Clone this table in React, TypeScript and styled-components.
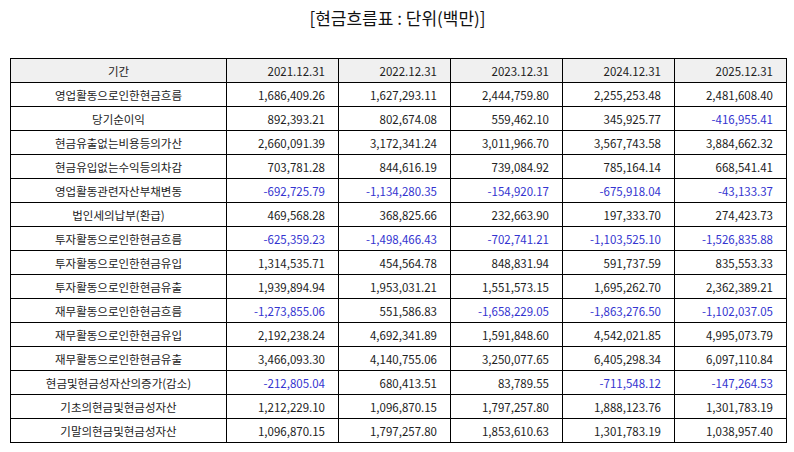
import styled, { createGlobalStyle } from "styled-components";

interface Row {
  label: string;
  values: number[];
}

const periods = ["2021.12.31", "2022.12.31", "2023.12.31", "2024.12.31", "2025.12.31"];

const rows: Row[] = [
  { label: "영업활동으로인한현금흐름", values: [1686409.26, 1627293.11, 2444759.8, 2255253.48, 2481608.4] },
  { label: "당기순이익", values: [892393.21, 802674.08, 559462.1, 345925.77, -416955.41] },
  { label: "현금유출없는비용등의가산", values: [2660091.39, 3172341.24, 3011966.7, 3567743.58, 3884662.32] },
  { label: "현금유입없는수익등의차감", values: [703781.28, 844616.19, 739084.92, 785164.14, 668541.41] },
  { label: "영업활동관련자산부채변동", values: [-692725.79, -1134280.35, -154920.17, -675918.04, -43133.37] },
  { label: "법인세의납부(환급)", values: [469568.28, 368825.66, 232663.9, 197333.7, 274423.73] },
  { label: "투자활동으로인한현금흐름", values: [-625359.23, -1498466.43, -702741.21, -1103525.1, -1526835.88] },
  { label: "투자활동으로인한현금유입", values: [1314535.71, 454564.78, 848831.94, 591737.59, 835553.33] },
  { label: "투자활동으로인한현금유출", values: [1939894.94, 1953031.21, 1551573.15, 1695262.7, 2362389.21] },
  { label: "재무활동으로인한현금흐름", values: [-1273855.06, 551586.83, -1658229.05, -1863276.5, -1102037.05] },
  { label: "재무활동으로인한현금유입", values: [2192238.24, 4692341.89, 1591848.6, 4542021.85, 4995073.79] },
  { label: "재무활동으로인한현금유출", values: [3466093.3, 4140755.06, 3250077.65, 6405298.34, 6097110.84] },
  { label: "현금및현금성자산의증가(감소)", values: [-212805.04, 680413.51, 83789.55, -711548.12, -147264.53] },
  { label: "기초의현금및현금성자산", values: [1212229.1, 1096870.15, 1797257.8, 1888123.76, 1301783.19] },
  { label: "기말의현금및현금성자산", values: [1096870.15, 1797257.8, 1853610.63, 1301783.19, 1038957.4] },
];

const format = (n: number) =>
  n.toLocaleString("en-US", { minimumFractionDigits: 2, maximumFractionDigits: 2 });

const App = () => {
  return (
    <>
      <GlobalStyle />
      <Page>
        <Title>[현금흐름표 : 단위(백만)]</Title>
        <Table>
          <colgroup>
            <col style={{ width: 216 }} />
            {periods.map((p) => (
              <col key={p} style={{ width: 112 }} />
            ))}
          </colgroup>
          <thead>
            <tr>
              <HeadCell>기간</HeadCell>
              {periods.map((p) => (
                <HeadCell key={p} $right>
                  {p}
                </HeadCell>
              ))}
            </tr>
          </thead>
          <tbody>
            {rows.map((row) => (
              <tr key={row.label}>
                <LabelCell>{row.label}</LabelCell>
                {row.values.map((v, i) => (
                  <ValueCell key={i} $negative={v < 0}>
                    {format(v)}
                  </ValueCell>
                ))}
              </tr>
            ))}
          </tbody>
        </Table>
      </Page>
    </>
  );
};

export default App;

const GlobalStyle = createGlobalStyle`
  body {
    margin: 0;
    background: #fff;
    font-family: "Noto Sans CJK KR", "Noto Sans", sans-serif;
  }
`;

const Page = styled.div`
  width: 794px;
  padding: 6px 9px 0 10px;
  box-sizing: border-box;
`;

const Title = styled.h1`
  margin: 0;
  height: 24px;
  line-height: 24px;
  text-align: center;
  font-size: 17px;
  font-weight: 400;
  color: #111;
`;

const Table = styled.table`
  margin-top: 28px;
  width: 775px;
  border-collapse: collapse;
  table-layout: fixed;
  font-size: 11.5px;
  color: #222;
`;

const HeadCell = styled.th<{ $right?: boolean }>`
  height: 23px;
  padding: 0 13px;
  border: 1px solid #000;
  background: #f0f0f0;
  font-weight: 400;
  text-align: ${(p) => (p.$right ? "right" : "center")};
`;

const LabelCell = styled.td`
  height: 23px;
  padding: 0 6px;
  border: 1px solid #000;
  text-align: center;
  white-space: nowrap;
`;

const ValueCell = styled.td<{ $negative: boolean }>`
  height: 23px;
  padding: 0 13px;
  border: 1px solid #000;
  text-align: right;
  white-space: nowrap;
  color: ${(p) => (p.$negative ? "#3434d0" : "#222")};
`;
